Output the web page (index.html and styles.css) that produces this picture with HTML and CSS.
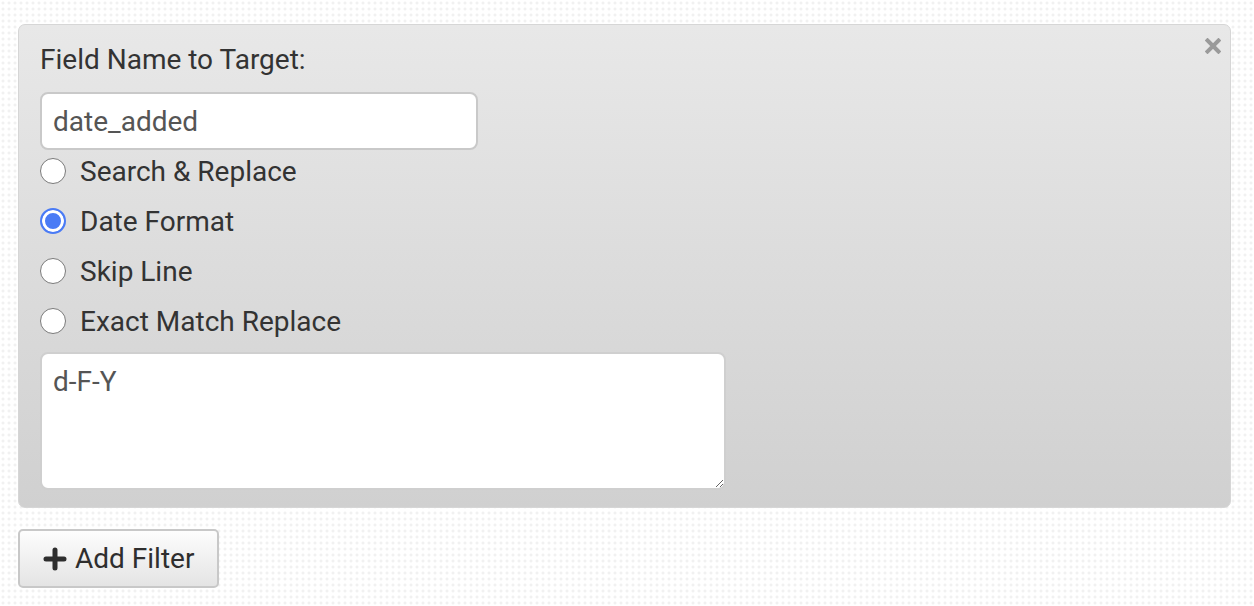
FILE: index.html
```html
<!DOCTYPE html>
<html>
<head>
<meta charset="utf-8">
<link rel="stylesheet" href="styles.css">
</head>
<body>
<div class="wrap">
  <div class="panel">
    <svg class="close" width="16" height="16" viewBox="0 0 16 16"><path d="M2.5 2.5 L13.5 13.5 M13.5 2.5 L2.5 13.5" stroke="#9a9a9a" stroke-width="4" stroke-linecap="square"/></svg>
    <div class="field-label">Field Name to Target:</div>
    <input class="text-input" type="text" value="date_added">
    <div class="options">
      <label class="opt"><input type="radio" name="t"><span>Search &amp; Replace</span></label>
      <label class="opt"><input type="radio" name="t" checked><span>Date Format</span></label>
      <label class="opt"><input type="radio" name="t"><span>Skip Line</span></label>
      <label class="opt"><input type="radio" name="t"><span>Exact Match Replace</span></label>
    </div>
    <textarea class="area">d-F-Y</textarea>
  </div>
  <button class="btn"><svg width="24" height="24" viewBox="0 0 24 24"><path d="M12 3 V21 M3 12 H21" stroke="#2e2e2e" stroke-width="5" stroke-linecap="round"/></svg><span>Add Filter</span></button>
</div>
</body>
</html>
```
FILE: styles.css
```css
html, body {
  margin: 0;
  padding: 0;
}
body {
  width: 1254px;
  height: 606px;
  overflow: hidden;
  background-color: #ffffff;
  background-image: radial-gradient(circle at 3px 3px, #f1f1f1 0 1.2px, transparent 1.8px);
  background-size: 6px 6px;
  font-family: Roboto, "Liberation Sans", sans-serif;
  color: #333;
}
.wrap {
  padding: 24px 23px 0 18px;
}
.panel {
  position: relative;
  border: 1px solid #d6d6d6;
  border-radius: 7px;
  background: linear-gradient(#e8e8e8, #d0d0d0);
  padding: 18px 22px 17px 21px;
}
.close {
  position: absolute;
  top: 13px;
  right: 9px;
}
.field-label {
  font-size: 28px;
  line-height: 34px;
  color: #333;
  margin-bottom: 15px;
}
.text-input {
  display: block;
  box-sizing: border-box;
  width: 438px;
  height: 58px;
  border: 2px solid #c9c9c9;
  border-radius: 8px;
  background: #fff;
  padding: 0 11px;
  font-family: Roboto, "Liberation Sans", sans-serif;
  font-size: 28px;
  color: #555;
  outline: none;
}
.options {
  display: flex;
  flex-direction: column;
  gap: 8px;
}
.opt {
  display: flex;
  align-items: center;
  gap: 14px;
  height: 42px;
  font-size: 28px;
  color: #333;
}
.opt input {
  appearance: none;
  -webkit-appearance: none;
  margin: 0;
  width: 26px;
  height: 26px;
  box-sizing: border-box;
  border: 1.5px solid #7a7a7a;
  border-radius: 50%;
  background: #fff;
}
.opt input:checked {
  border: 2px solid #4a7bf5;
  box-shadow: inset 0 0 0 3px #fff;
  background: #4a7bf5;
}
.area {
  display: block;
  box-sizing: border-box;
  width: 686px;
  height: 138px;
  margin-top: 10px;
  border: 2px solid #cfcfcf;
  border-radius: 8px;
  background: #fff;
  padding: 10px 11px;
  font-family: Roboto, "Liberation Sans", sans-serif;
  font-size: 28px;
  line-height: 36px;
  color: #555;
  outline: none;
  resize: both;
}
.btn {
  margin-top: 21px;
  display: flex;
  align-items: center;
  gap: 8px;
  box-sizing: border-box;
  width: 201px;
  height: 59px;
  padding: 0 0 0 23px;
  border: 2px solid #c8c8c8;
  border-radius: 5px;
  background: linear-gradient(#fdfdfd, #e4e4e4);
  font-family: Roboto, "Liberation Sans", sans-serif;
  font-size: 28px;
  color: #2e2e2e;
}
```
